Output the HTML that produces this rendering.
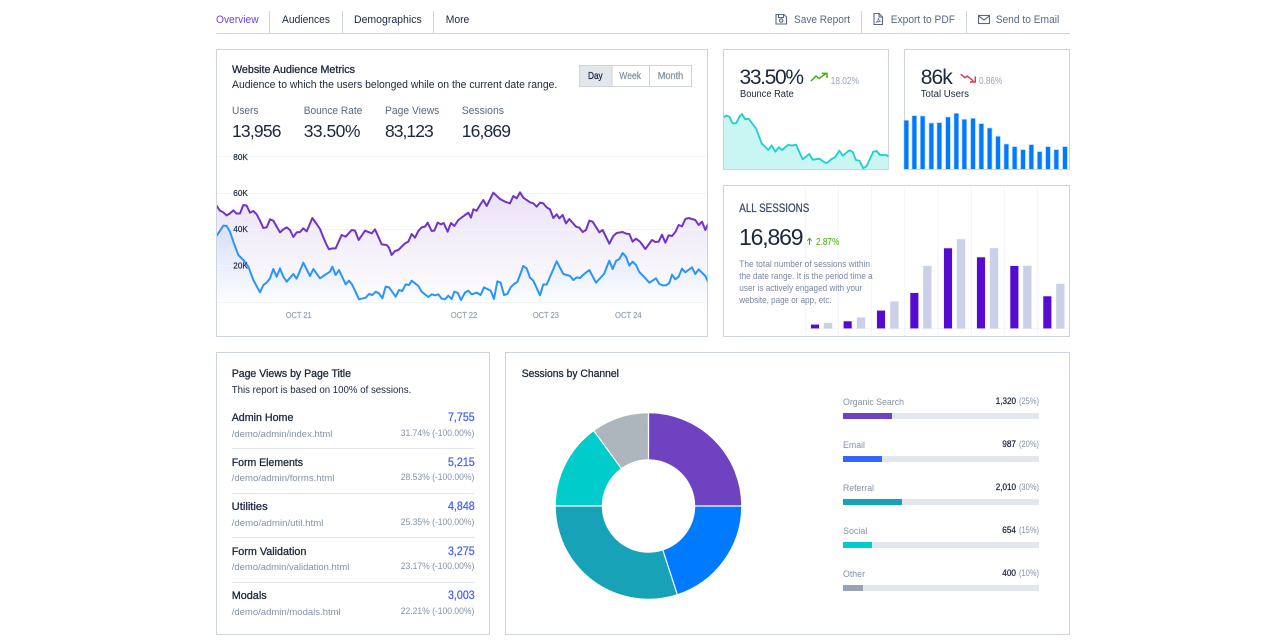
<!DOCTYPE html>
<html lang="en">
<head>
<meta charset="utf-8">
<title>Dashboard</title>
<style>
html,body{margin:0;padding:0;background:#fff;width:1280px;height:640px;overflow:hidden}
svg{display:block}
text{font-family:"Liberation Sans",sans-serif;white-space:pre}
.card{fill:#fff;stroke:#cdd4e0;stroke-width:1}
.sep{stroke:#cdd4e0;stroke-width:1}
.nav{font-size:11px;fill:#1c273c}
.act{font-size:11px;fill:#596882}
.t{font-size:11px;fill:#1c273c;stroke:#1c273c;stroke-width:.3px}
.s{font-size:11px;fill:#1c273c}
.lab{font-size:11px;fill:#596882}
.num{font-size:17.500px;fill:#1c273c}
.ax{font-size:8.500px;fill:#1c273c;stroke:#1c273c;stroke-width:.2px}
.ox{font-size:8.500px;fill:#97a3b9;stroke:#97a3b9;stroke-width:.2px}
.big{font-size:20px;fill:#1c273c}
.mini{font-size:10px;fill:#1c273c}
.pct{font-size:10px;fill:#97a3b9}
.desc{font-size:9.500px;fill:#7987a1}
.rt{font-size:11px;fill:#1c273c;stroke:#1c273c;stroke-width:.3px}
.rp{font-size:9.500px;fill:#8392a5}
.rv{font-size:11.500px;fill:#4b63f7;stroke:#4b63f7;stroke-width:.3px}
.rq{font-size:9.500px;fill:#8392a5}
.cl{font-size:9.500px;fill:#8392a5}
.cv{font-size:9px;fill:#1c273c;stroke:#1c273c;stroke-width:.25px}
.cq{font-size:9px;fill:#8392a5}
</style>
</head>
<body>
<svg xmlns="http://www.w3.org/2000/svg" width="1280" height="640" viewBox="0 0 1280 640">
<defs>
<linearGradient id="gp" gradientUnits="userSpaceOnUse" x1="0" y1="130" x2="0" y2="470">
<stop offset="0" stop-color="#6f42c1" stop-opacity=".15"/>
<stop offset="1" stop-color="#6f42c1" stop-opacity="0"/>
</linearGradient>
<linearGradient id="gb" gradientUnits="userSpaceOnUse" x1="0" y1="230" x2="0" y2="470">
<stop offset="0" stop-color="#007bff" stop-opacity=".1"/>
<stop offset="1" stop-color="#007bff" stop-opacity="0"/>
</linearGradient>
<clipPath id="labs"><rect x="220" y="106.600" width="300" height="14"/></clipPath>
<clipPath id="c1"><rect x="217" y="150" width="490.500" height="186"/></clipPath>
</defs>

<!-- top nav -->
<line x1="216" y1="33.500" x2="1070" y2="33.500" class="sep"/>
<line x1="269.500" y1="11" x2="269.500" y2="33" class="sep"/>
<line x1="342.500" y1="11" x2="342.500" y2="33" class="sep"/>
<line x1="433.500" y1="11" x2="433.500" y2="33" class="sep"/>
<line x1="861.500" y1="11" x2="861.500" y2="33" class="sep"/>
<line x1="966.500" y1="11" x2="966.500" y2="33" class="sep"/>
<text x="216" y="23" class="nav" style="fill:#6f42e0" textLength="42.600" lengthAdjust="spacingAndGlyphs">Overview</text>
<text x="282" y="23" class="nav" textLength="48" lengthAdjust="spacingAndGlyphs">Audiences</text>
<text x="354" y="23" class="nav" textLength="67.700" lengthAdjust="spacingAndGlyphs">Demographics</text>
<text x="445.700" y="23" class="nav" textLength="23.600" lengthAdjust="spacingAndGlyphs">More</text>
<text x="794" y="23" class="act" textLength="56" lengthAdjust="spacingAndGlyphs">Save Report</text>
<text x="890.700" y="23" class="act" textLength="64.300" lengthAdjust="spacingAndGlyphs">Export to PDF</text>
<text x="995.700" y="23" class="act" textLength="63.600" lengthAdjust="spacingAndGlyphs">Send to Email</text>
<g fill="none" stroke="#596882" stroke-width="1.100">
<path d="M776 14.500h8l2.500 2.500v7h-10.500z"/>
<path d="M778.500 14.500v3h5v-3"/>
<circle cx="781.200" cy="20.500" r="1.700"/>
<path d="M874 13.500h5l3.500 3.500v7.500h-8.500z"/>
<path d="M879 13.500v3.500h3.500"/>
<path d="M876 22.500c1.500-1 2.500-3 2.300-4.500c.2 1.500 1 2.800 2.500 3.500c-1.500 0-3.300.3-4.800 1z" stroke-width=".7"/>
<rect x="978.500" y="15.500" width="11" height="8"/>
<path d="M978.500 16l5.500 4l5.500-4"/>
</g>

<!-- main card -->
<rect x="216.500" y="49.500" width="491" height="287" class="card"/>
<text x="232" y="73" class="t" textLength="123" lengthAdjust="spacingAndGlyphs">Website Audience Metrics</text>
<text x="232" y="88" class="s" textLength="325.300" lengthAdjust="spacingAndGlyphs">Audience to which the users belonged while on the current date range.</text>
<rect x="579.500" y="65.500" width="112" height="21" fill="#fff" stroke="#cdd4e0"/>
<rect x="579.500" y="65.500" width="32.500" height="21" fill="#e3e7ed" stroke="#cdd4e0"/>
<line x1="649.500" y1="65" x2="649.500" y2="87" class="sep"/>
<text x="588" y="79" style="font-size:10px;fill:#1c273c;stroke:#1c273c;stroke-width:.25px" textLength="14.700" lengthAdjust="spacingAndGlyphs">Day</text>
<text x="619.300" y="79" style="font-size:10px;fill:#8392a5;stroke:#8392a5;stroke-width:.25px" textLength="21.700" lengthAdjust="spacingAndGlyphs">Week</text>
<text x="657.700" y="79" style="font-size:10px;fill:#8392a5;stroke:#8392a5;stroke-width:.25px" textLength="25.600" lengthAdjust="spacingAndGlyphs">Month</text>

<g clip-path="url(#labs)">
<text x="232" y="114" class="lab" textLength="26.500" lengthAdjust="spacingAndGlyphs">Users</text>
<text x="303.700" y="114" class="lab" textLength="58.600" lengthAdjust="spacingAndGlyphs">Bounce Rate</text>
<text x="385" y="114" class="lab" textLength="54.300" lengthAdjust="spacingAndGlyphs">Page Views</text>
<text x="461.700" y="114" class="lab" textLength="42.300" lengthAdjust="spacingAndGlyphs">Sessions</text>
</g>
<text x="232" y="137" class="num" textLength="49.500" lengthAdjust="spacing">13,956</text>
<text x="303.700" y="137" class="num" textLength="56.700" lengthAdjust="spacing">33.50%</text>
<text x="385" y="137" class="num" textLength="48.700" lengthAdjust="spacing">83,123</text>
<text x="461.700" y="137" class="num" textLength="49.300" lengthAdjust="spacing">16,869</text>

<!-- line chart -->
<g clip-path="url(#c1)">
<g transform="translate(215,150) scale(.33333)">
<path fill="url(#gp)" d="M5 168L15 182L25 187L35 196L45 190L55 181L65 191L75 190L85 165L95 167L105 188L115 183L125 193L135 212L145 234L155 232L165 208L175 212L185 230L195 247L205 238L215 232L225 240L235 261L245 247L255 246L265 235L275 244L292 204L305 222L315 237L325 262L335 285L342 298L352 295L362 295L380 255L392 260L410 240L420 242L431 270L450 242L470 250L480 238L500 283L515 285L522 293L530 315L540 303L550 300L570 280L580 275L590 252L600 263L610 243L620 232L630 230L638 218L650 243L658 242L668 218L678 223L686 219L698 245L708 219L718 228L730 210L750 195L750 470L5 470Z"/>
<path fill="url(#gb)" d="M5 257L25 227L35 228L45 245L55 275L70 315L85 330L100 350L115 390L135 427L145 405L155 398L165 385L175 357L185 380L195 355L205 380L215 395L235 372L245 386L265 338L285 378L295 357L315 385L325 378L345 365L352 350L362 375L372 360L392 403L402 392L412 405L432 448L452 443L462 432L472 435L482 425L492 430L502 445L512 410L522 412L542 440L552 420L562 423L572 403L582 405L590 392L610 408L620 425L640 441L650 433L660 436L670 433L680 446L690 448L700 437L710 447L718 425L728 428L738 450L750 428L750 470L5 470Z"/>
</g>
<g transform="translate(460,150) scale(.33333)">
<path fill="url(#gp)" d="M15 195L25 188L33 203L40 178L50 182L60 165L70 150L80 168L100 128L120 147L135 155L150 160L160 138L170 145L180 127L190 143L210 157L220 160L230 170L240 158L250 160L260 172L270 178L280 204L290 193L298 205L308 195L318 220L328 207L348 230L358 233L368 246L378 240L388 212L398 215L418 247L428 240L448 281L460 258L470 249L488 246L498 251L508 252L518 275L528 266L540 275L556 297L576 270L586 276L596 275L606 254L616 278L626 256L636 258L646 246L656 225L666 229L676 207L686 204L706 210L716 225L726 215L736 240L744 222L744 470L15 470Z"/>
<path fill="url(#gb)" d="M15 428L25 422L35 433L50 428L62 435L72 412L92 422L102 447L112 394L122 398L132 435L142 432L152 412L162 402L172 396L190 348L200 355L210 383L220 392L240 436L250 403L260 404L290 334L310 372L330 378L340 390L350 382L360 384L370 374L388 360L408 398L432 372L448 332L458 357L468 333L478 327L488 309L498 320L508 347L518 335L528 345L538 366L548 376L568 398L588 385L598 402L608 406L618 406L628 399L636 374L646 388L656 380L666 356L676 367L696 352L706 372L716 358L736 378L744 395L744 470L15 470Z"/>
</g>
<g fill="none" stroke="#f3f4f7" stroke-width="1">
<line x1="217" y1="156.500" x2="707" y2="156.500"/>
<line x1="217" y1="193.500" x2="707" y2="193.500"/>
<line x1="217" y1="229.500" x2="707" y2="229.500"/>
<line x1="217" y1="265.500" x2="707" y2="265.500"/>
<line x1="217" y1="302.500" x2="707" y2="302.500"/>
</g>
<g transform="translate(215,150) scale(.33333)" fill="none" stroke-width="6" stroke-linejoin="round" stroke-linecap="round">
<polyline stroke="#6f35cb" points="5,168 15,182 25,187 35,196 45,190 55,181 65,191 75,190 85,165 95,167 105,188 115,183 125,193 135,212 145,234 155,232 165,208 175,212 185,230 195,247 205,238 215,232 225,240 235,261 245,247 255,246 265,235 275,244 292,204 305,222 315,237 325,262 335,285 342,298 352,295 362,295 380,255 392,260 410,240 420,242 431,270 450,242 470,250 480,238 500,283 515,285 522,293 530,315 540,303 550,300 570,280 580,275 590,252 600,263 610,243 620,232 630,230 638,218 650,243 658,242 668,218 678,223 686,219 698,245 708,219 718,228 730,210 750,195"/>
<polyline stroke="#2a94ff" points="5,257 25,227 35,228 45,245 55,275 70,315 85,330 100,350 115,390 135,427 145,405 155,398 165,385 175,357 185,380 195,355 205,380 215,395 235,372 245,386 265,338 285,378 295,357 315,385 325,378 345,365 352,350 362,375 372,360 392,403 402,392 412,405 432,448 452,443 462,432 472,435 482,425 492,430 502,445 512,410 522,412 542,440 552,420 562,423 572,403 582,405 590,392 610,408 620,425 640,441 650,433 660,436 670,433 680,446 690,448 700,437 710,447 718,425 728,428 738,450 750,428"/>
</g>
<g transform="translate(460,150) scale(.33333)" fill="none" stroke-width="6" stroke-linejoin="round" stroke-linecap="round">
<polyline stroke="#6f35cb" points="15,195 25,188 33,203 40,178 50,182 60,165 70,150 80,168 100,128 120,147 135,155 150,160 160,138 170,145 180,127 190,143 210,157 220,160 230,170 240,158 250,160 260,172 270,178 280,204 290,193 298,205 308,195 318,220 328,207 348,230 358,233 368,246 378,240 388,212 398,215 418,247 428,240 448,281 460,258 470,249 488,246 498,251 508,252 518,275 528,266 540,275 556,297 576,270 586,276 596,275 606,254 616,278 626,256 636,258 646,246 656,225 666,229 676,207 686,204 706,210 716,225 726,215 736,240 744,222"/>
<polyline stroke="#2a94ff" points="15,428 25,422 35,433 50,428 62,435 72,412 92,422 102,447 112,394 122,398 132,435 142,432 152,412 162,402 172,396 190,348 200,355 210,383 220,392 240,436 250,403 260,404 290,334 310,372 330,378 340,390 350,382 360,384 370,374 388,360 408,398 432,372 448,332 458,357 468,333 478,327 488,309 498,320 508,347 518,335 528,345 538,366 548,376 568,398 588,385 598,402 608,406 618,406 628,399 636,374 646,388 656,380 666,356 676,367 696,352 706,372 716,358 736,378 744,395"/>
</g>
</g>
<text x="233.300" y="160" class="ax" textLength="14.500" lengthAdjust="spacingAndGlyphs">80K</text>
<text x="233.300" y="196" class="ax" textLength="14.500" lengthAdjust="spacingAndGlyphs">60K</text>
<text x="233.300" y="232" class="ax" textLength="14.500" lengthAdjust="spacingAndGlyphs">40K</text>
<text x="233.300" y="268.500" class="ax" textLength="14.500" lengthAdjust="spacingAndGlyphs">20K</text>
<text x="285.700" y="318" class="ox" textLength="26" lengthAdjust="spacingAndGlyphs">OCT 21</text>
<text x="450.700" y="318" class="ox" textLength="26.600" lengthAdjust="spacingAndGlyphs">OCT 22</text>
<text x="532.700" y="318" class="ox" textLength="26.300" lengthAdjust="spacingAndGlyphs">OCT 23</text>
<text x="615" y="318" class="ox" textLength="26.700" lengthAdjust="spacingAndGlyphs">OCT 24</text>

<!-- bounce card -->
<rect x="723.500" y="49.500" width="165" height="120" class="card"/>
<text x="739.500" y="84" class="big" style="font-size:21px" textLength="64.500" lengthAdjust="spacing">33.50%</text>
<text x="740" y="97" class="mini" textLength="53.700" lengthAdjust="spacingAndGlyphs">Bounce Rate</text>
<text x="830.700" y="84" class="pct" textLength="28.300" lengthAdjust="spacingAndGlyphs">18.02%</text>
<path d="M811 81L816 76L819 78.500L826 73.500M822 73.300H827V78" fill="none" stroke="#3bb001" stroke-width="1.400"/>
<g transform="translate(720,100) scale(.33333)">
<path fill="#c9f5f2" d="M12 52L18 47L28 50L38 70L48 70L60 48L66 42L76 58L86 56L100 75L108 85L125 130L145 150L155 136L166 155L176 142L186 150L205 134L215 137L228 134L248 178L268 162L278 179L298 176L315 188L322 188L335 177L345 172L358 152L368 167L388 151L398 156L408 180L418 182L430 205L440 198L460 155L470 153L480 165L500 165L505 170L505 208L12 208Z"/>
<polyline fill="none" stroke="#1fd0cc" stroke-width="5.500" stroke-linejoin="round" points="12,52 18,47 28,50 38,70 48,70 60,48 66,42 76,58 86,56 100,75 108,85 125,130 145,150 155,136 166,155 176,142 186,150 205,134 215,137 228,134 248,178 268,162 278,179 298,176 315,188 322,188 335,177 345,172 358,152 368,167 388,151 398,156 408,180 418,182 430,205 440,198 460,155 470,153 480,165 500,165 505,170"/>
</g>
<path d="M723.500 169.500H888.500" stroke="#cdd4e0"/>

<!-- users card -->
<rect x="904.500" y="49.500" width="165" height="120" class="card"/>
<text x="920.700" y="84" class="big" style="font-size:21px" textLength="32" lengthAdjust="spacing">86k</text>
<text x="920.700" y="97" class="mini" textLength="48.300" lengthAdjust="spacingAndGlyphs">Total Users</text>
<text x="979" y="84" class="pct" textLength="23.300" lengthAdjust="spacingAndGlyphs">0.86%</text>
<path d="M960.700 74.300L965 77.700L967.300 76L973.300 81M975.300 76.500V82H970" fill="none" stroke="#dc3545" stroke-width="1.400"/>
<g transform="translate(900,100) scale(.33333)" fill="#007bff" stroke="#007bff" stroke-opacity=".35" stroke-width="4">
<rect x="13" y="62" width="12" height="145"/>
<rect x="37" y="48" width="12" height="159"/>
<rect x="62" y="49" width="12" height="158"/>
<rect x="88" y="70" width="12" height="137"/>
<rect x="112" y="69" width="12" height="138"/>
<rect x="138" y="52" width="12" height="155"/>
<rect x="163" y="41" width="12" height="166"/>
<rect x="187" y="59" width="12" height="148"/>
<rect x="213" y="56" width="12" height="151"/>
<rect x="238" y="72" width="12" height="135"/>
<rect x="263" y="85" width="12" height="122"/>
<rect x="288" y="110" width="12" height="97"/>
<rect x="313" y="133" width="12" height="74"/>
<rect x="338" y="141" width="12" height="66"/>
<rect x="363" y="150" width="12" height="57"/>
<rect x="388" y="135" width="12" height="72"/>
<rect x="413" y="156" width="12" height="51"/>
<rect x="438" y="141" width="12" height="66"/>
<rect x="463" y="150" width="12" height="57"/>
<rect x="489" y="141" width="12" height="66"/>
</g>
<path d="M904.500 169.500H1069.500" stroke="#cdd4e0"/>

<!-- all sessions -->
<rect x="723.500" y="185.500" width="346" height="151" class="card"/>
<g transform="translate(720,180) scale(.33333)">
<g stroke="#f3f4f8" stroke-width="3">
<line x1="256" y1="20" x2="256" y2="468"/>
<line x1="355" y1="20" x2="355" y2="468"/>
<line x1="455" y1="20" x2="455" y2="468"/>
<line x1="554" y1="20" x2="554" y2="468"/>
<line x1="654" y1="20" x2="654" y2="468"/>
<line x1="754" y1="20" x2="754" y2="468"/>
<line x1="853" y1="20" x2="853" y2="468"/>
<line x1="952" y1="20" x2="952" y2="468"/>
<line x1="256" y1="446" x2="1046" y2="446"/>
</g>
<g fill="#560bd0" stroke="#560bd0" stroke-opacity=".15" stroke-width="3">
<rect x="273" y="434" width="24" height="11"/>
<rect x="371" y="424" width="24" height="21"/>
<rect x="471" y="392" width="24" height="53"/>
<rect x="571" y="339" width="24" height="106"/>
<rect x="672" y="205" width="24" height="240"/>
<rect x="771" y="232" width="24" height="213"/>
<rect x="871" y="258" width="24" height="187"/>
<rect x="970" y="349" width="24" height="96"/>
</g>
<g fill="#cad0e8" stroke="#cad0e8" stroke-opacity=".4" stroke-width="3">
<rect x="312" y="429" width="24" height="16"/>
<rect x="411" y="413" width="24" height="32"/>
<rect x="511" y="365" width="24" height="80"/>
<rect x="610" y="258" width="24" height="187"/>
<rect x="711" y="178" width="24" height="267"/>
<rect x="810" y="205" width="24" height="240"/>
<rect x="910" y="258" width="24" height="187"/>
<rect x="1009" y="312" width="24" height="133"/>
</g>
</g>
<text x="739.300" y="212" style="font-size:11.500px;fill:#3b4863;stroke:#3b4863;stroke-width:.25px" textLength="70" lengthAdjust="spacingAndGlyphs">ALL SESSIONS</text>
<text x="739" y="245" style="font-size:23px;fill:#1c273c" textLength="64.500" lengthAdjust="spacing">16,869</text>
<path d="M809.500 245V238.500M807.300 240.800L809.500 238.300L811.700 240.800" fill="none" stroke="#3bb001" stroke-width="1"/>
<text x="816" y="245" style="font-size:10px;fill:#3bb001" textLength="23.300" lengthAdjust="spacingAndGlyphs">2.87%</text>
<text x="739.300" y="267" class="desc" textLength="130.700" lengthAdjust="spacingAndGlyphs">The total number of sessions within</text>
<text x="739.300" y="279" class="desc" textLength="133.300" lengthAdjust="spacingAndGlyphs">the date range. It is the period time a</text>
<text x="739.300" y="291" class="desc" textLength="123" lengthAdjust="spacingAndGlyphs">user is actively engaged with your</text>
<text x="739.300" y="303" class="desc" textLength="92.300" lengthAdjust="spacingAndGlyphs">website, page or app, etc.</text>

<!-- page views -->
<rect x="216.500" y="352.500" width="273" height="282" class="card"/>
<text x="231.700" y="377" class="t" textLength="119.300" lengthAdjust="spacingAndGlyphs">Page Views by Page Title</text>
<text x="231.700" y="393" style="font-size:10px;fill:#1c273c" textLength="179.600" lengthAdjust="spacingAndGlyphs">This report is based on 100% of sessions.</text>
<g stroke="#e3e7ed">
<line x1="232" y1="448.500" x2="474.500" y2="448.500"/>
<line x1="232" y1="493.500" x2="474.500" y2="493.500"/>
<line x1="232" y1="537.500" x2="474.500" y2="537.500"/>
<line x1="232" y1="582.500" x2="474.500" y2="582.500"/>
</g>
<text x="231.700" y="421" class="rt" textLength="61.700" lengthAdjust="spacingAndGlyphs">Admin Home</text>
<text x="231.700" y="466" class="rt" textLength="71.300" lengthAdjust="spacingAndGlyphs">Form Elements</text>
<text x="231.700" y="510" class="rt" textLength="36" lengthAdjust="spacingAndGlyphs">Utilities</text>
<text x="231.700" y="555" class="rt" textLength="74.700" lengthAdjust="spacingAndGlyphs">Form Validation</text>
<text x="231.700" y="599" class="rt" textLength="35" lengthAdjust="spacingAndGlyphs">Modals</text>
<text x="231.700" y="437" class="rp" textLength="100.700" lengthAdjust="spacingAndGlyphs">/demo/admin/index.html</text>
<text x="231.700" y="481" class="rp" textLength="102.700" lengthAdjust="spacingAndGlyphs">/demo/admin/forms.html</text>
<text x="231.700" y="526" class="rp" textLength="91.700" lengthAdjust="spacingAndGlyphs">/demo/admin/util.html</text>
<text x="231.700" y="570" class="rp" textLength="117.700" lengthAdjust="spacingAndGlyphs">/demo/admin/validation.html</text>
<text x="231.700" y="615" class="rp" textLength="109" lengthAdjust="spacingAndGlyphs">/demo/admin/modals.html</text>
<text x="448" y="421" class="rv" textLength="26.700" lengthAdjust="spacingAndGlyphs">7,755</text>
<text x="448" y="466" class="rv" textLength="26.700" lengthAdjust="spacingAndGlyphs">5,215</text>
<text x="448" y="510" class="rv" textLength="26.700" lengthAdjust="spacingAndGlyphs">4,848</text>
<text x="448" y="555" class="rv" textLength="26.700" lengthAdjust="spacingAndGlyphs">3,275</text>
<text x="448" y="599" class="rv" textLength="26.700" lengthAdjust="spacingAndGlyphs">3,003</text>
<text x="400.700" y="436" class="rq" textLength="73.700" lengthAdjust="spacingAndGlyphs">31.74% (-100.00%)</text>
<text x="400.700" y="480" class="rq" textLength="73.700" lengthAdjust="spacingAndGlyphs">28.53% (-100.00%)</text>
<text x="400.700" y="525" class="rq" textLength="73.700" lengthAdjust="spacingAndGlyphs">25.35% (-100.00%)</text>
<text x="400.700" y="569" class="rq" textLength="73.700" lengthAdjust="spacingAndGlyphs">23.17% (-100.00%)</text>
<text x="400.700" y="614" class="rq" textLength="73.700" lengthAdjust="spacingAndGlyphs">22.21% (-100.00%)</text>

<!-- sessions by channel -->
<rect x="505.500" y="352.500" width="564" height="282" class="card"/>
<text x="521.700" y="377" class="t" textLength="97.300" lengthAdjust="spacingAndGlyphs">Sessions by Channel</text>
<g transform="rotate(-90 648.500 506)" fill="none" stroke-width="46">
<circle cx="648.500" cy="506" r="69.700" pathLength="100" stroke="#6f42c1" stroke-dasharray="25 75" stroke-dashoffset="0"/>
<circle cx="648.500" cy="506" r="69.700" pathLength="100" stroke="#007bff" stroke-dasharray="20 80" stroke-dashoffset="-25"/>
<circle cx="648.500" cy="506" r="69.700" pathLength="100" stroke="#17a2b8" stroke-dasharray="30 70" stroke-dashoffset="-45"/>
<circle cx="648.500" cy="506" r="69.700" pathLength="100" stroke="#00cccc" stroke-dasharray="15 85" stroke-dashoffset="-75"/>
<circle cx="648.500" cy="506" r="69.700" pathLength="100" stroke="#adb5bd" stroke-dasharray="10 90" stroke-dashoffset="-90"/>
</g>
<g stroke="#fff" stroke-width="1.200">
<line x1="648.500" y1="506" x2="648.500" y2="410"/>
<line x1="648.500" y1="506" x2="744" y2="506"/>
<line x1="648.500" y1="506" x2="678.200" y2="597.300"/>
<line x1="648.500" y1="506" x2="553" y2="506"/>
<line x1="648.500" y1="506" x2="592.100" y2="428.300"/>
</g>
<text x="843" y="405" class="cl" textLength="61" lengthAdjust="spacingAndGlyphs">Organic Search</text>
<text x="843" y="448" class="cl" textLength="22" lengthAdjust="spacingAndGlyphs">Email</text>
<text x="843" y="491" class="cl" textLength="31" lengthAdjust="spacingAndGlyphs">Referral</text>
<text x="843" y="534" class="cl" textLength="24.300" lengthAdjust="spacingAndGlyphs">Social</text>
<text x="843" y="577" class="cl" textLength="22" lengthAdjust="spacingAndGlyphs">Other</text>
<text x="995.700" y="404" class="cv" textLength="20.300" lengthAdjust="spacingAndGlyphs">1,320</text>
<text x="1002.300" y="447" class="cv" textLength="13.700" lengthAdjust="spacingAndGlyphs">987</text>
<text x="995.700" y="490" class="cv" textLength="20.300" lengthAdjust="spacingAndGlyphs">2,010</text>
<text x="1002.300" y="533" class="cv" textLength="13.700" lengthAdjust="spacingAndGlyphs">654</text>
<text x="1002.300" y="576" class="cv" textLength="13.700" lengthAdjust="spacingAndGlyphs">400</text>
<text x="1019" y="404" class="cq" textLength="20" lengthAdjust="spacingAndGlyphs">(25%)</text>
<text x="1019" y="447" class="cq" textLength="20" lengthAdjust="spacingAndGlyphs">(20%)</text>
<text x="1019" y="490" class="cq" textLength="20" lengthAdjust="spacingAndGlyphs">(30%)</text>
<text x="1019" y="533" class="cq" textLength="20" lengthAdjust="spacingAndGlyphs">(15%)</text>
<text x="1019" y="576" class="cq" textLength="20" lengthAdjust="spacingAndGlyphs">(10%)</text>
<g fill="#e3e7ed">
<rect x="843" y="413" width="196" height="6"/>
<rect x="843" y="456" width="196" height="6"/>
<rect x="843" y="499" width="196" height="6"/>
<rect x="843" y="542" width="196" height="6"/>
<rect x="843" y="585" width="196" height="6"/>
</g>
<rect x="843" y="413" width="49" height="6" fill="#6f42c1"/>
<rect x="843" y="456" width="39" height="6" fill="#3366ff"/>
<rect x="843" y="499" width="59" height="6" fill="#17a2b8"/>
<rect x="843" y="542" width="29" height="6" fill="#00cccc"/>
<rect x="843" y="585" width="20" height="6" fill="#97a3b9"/>
</svg>
</body>
</html>
